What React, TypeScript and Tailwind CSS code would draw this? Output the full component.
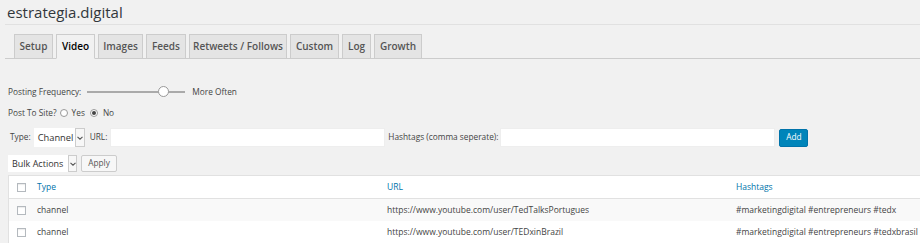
import React from "react";

const tabs: [string, number][] = [
  ["Setup", 39],
  ["Video", 39],
  ["Images", 45],
  ["Feeds", 40],
  ["Retweets / Follows", 98],
  ["Custom", 49],
  ["Log", 29],
  ["Growth", 48],
];

function Caret() {
  return (
    <svg width="6" height="4" viewBox="0 0 6 4" className="block">
      <path d="M0.5 0.8 L3 3.2 L5.5 0.8" fill="none" stroke="#555" strokeWidth="1.1" />
    </svg>
  );
}

function Check() {
  return <span className="block w-[9px] h-[9px] border border-[#b4b9be] bg-white shadow-[inset_0_1px_1px_rgba(0,0,0,0.08)]" />;
}

export default function App() {
  const rows = [
    { type: "channel", url: "https://www.youtube.com/user/TedTalksPortugues", tags: "#marketingdigital #entrepreneurs #tedx", alt: true },
    { type: "channel", url: "https://www.youtube.com/user/TEDxinBrazil", tags: "#marketingdigital #entrepreneurs #tedxbrasil", alt: false },
  ];
  return (
    <div className="w-[920px] h-[243px] overflow-hidden bg-[#f1f1f1] text-[#444] font-['Open_Sans',sans-serif]">
      <div className="pl-[7px] pt-[2px] h-[24px] text-[15px] leading-[20px] text-[#32373c]">estrategia.digital</div>
      <div className="ml-[5px] border-t border-[#e1e1e1]" />
      <div className="mt-[9px] ml-[5px] flex items-end gap-[3px] pl-[9px] border-b border-[#ccc] h-[25px]">
        {tabs.map(([t, w]) => (
          <div
            key={t}
            style={{ width: w }}
            className={
              "h-[24px] flex items-center justify-center text-[10px] font-semibold border border-[#ccc] " +
              (t === "Video"
                ? "bg-[#f1f1f1] text-[#000] border-b-[#f1f1f1] -mb-px h-[25px]"
                : "bg-[#e4e4e4] text-[#555] border-b-0")
            }
          >
            {t}
          </div>
        ))}
      </div>

      <div className="pl-[8px] text-[8.3px] text-[#444]">
        <div className="mt-[26px] flex items-center h-[14px]">
          <span>Posting Frequency:</span>
          <div className="relative ml-[6px] w-[98px] h-[14px]">
            <div className="absolute left-0 right-0 top-[6px] h-[2px] bg-[#aaa]" />
            <div className="absolute left-[71px] top-[1px] w-[11px] h-[11px] rounded-full bg-white border border-[#999]" />
          </div>
          <span className="ml-[7px]">More Often</span>
        </div>
        <div className="mt-[7px] flex items-center h-[14px]">
          <span>Post To Site?</span>
          <span className="ml-[3px] w-[8px] h-[8px] rounded-full border border-[#999] bg-white" />
          <span className="ml-[4px]">Yes</span>
          <span className="ml-[5px] w-[8px] h-[8px] rounded-full border border-[#999] bg-white flex items-center justify-center">
            <span className="w-[4px] h-[4px] rounded-full bg-[#444]" />
          </span>
          <span className="ml-[5px]">No</span>
        </div>
        <div className="mt-[8px] flex items-center h-[19px]">
          <span className="ml-[2px]">Type:</span>
          <div className="ml-[3px] flex h-[19px] w-[51px] bg-white">
            <span className="flex-1 pl-[4px] flex items-center text-[9.3px] text-[#333]">Channel</span>
            <span className="w-[10px] border border-[#ccc] bg-[#f7f7f7] flex items-center justify-center">
              <Caret />
            </span>
          </div>
          <span className="ml-[5px]">URL:</span>
          <div className="ml-[3px] h-[19px] w-[275px] bg-white border border-[#eee]" />
          <span className="ml-[3px]">Hashtags (comma seperate):</span>
          <div className="ml-[2px] h-[19px] w-[275px] bg-white border border-[#eee]" />
          <div className="ml-[4px] h-[18px] w-[29px] rounded-[2px] bg-[#0085ba] border border-[#0073aa] text-white flex items-center justify-center">
            Add
          </div>
        </div>
        <div className="mt-[8px] flex items-center h-[17px]">
          <div className="flex h-[17px] w-[69px] bg-white">
            <span className="flex-1 pl-[4px] flex items-center text-[9px] text-[#333]">Bulk Actions</span>
            <span className="w-[9px] border border-[#ccc] bg-[#f7f7f7] flex items-center justify-center">
              <Caret />
            </span>
          </div>
          <div className="ml-[4px] h-[17px] w-[36px] rounded-[2px] border border-[#ccc] bg-[#f7f7f7] flex items-center justify-center text-[#555]">
            Apply
          </div>
        </div>
      </div>

      <div className="mt-[3px] ml-[8px] border-t border-l border-[#e1e1e1] bg-white text-[8.5px]">
        <div className="flex items-center h-[23px] border-b border-[#e1e1e1] text-[#0073aa]">
          <div className="w-[28px] pl-[8px]"><Check /></div>
          <div className="w-[350px]">Type</div>
          <div className="w-[349px]">URL</div>
          <div>Hashtags</div>
        </div>
        {rows.map((r, i) => (
          <div key={i} className={"flex items-center h-[22px] " + (r.alt ? "bg-[#f9f9f9]" : "bg-white")}>
            <div className="w-[28px] pl-[8px]"><Check /></div>
            <div className="w-[350px]">{r.type}</div>
            <div className="w-[349px]">{r.url}</div>
            <div>{r.tags}</div>
          </div>
        ))}
      </div>
    </div>
  );
}
